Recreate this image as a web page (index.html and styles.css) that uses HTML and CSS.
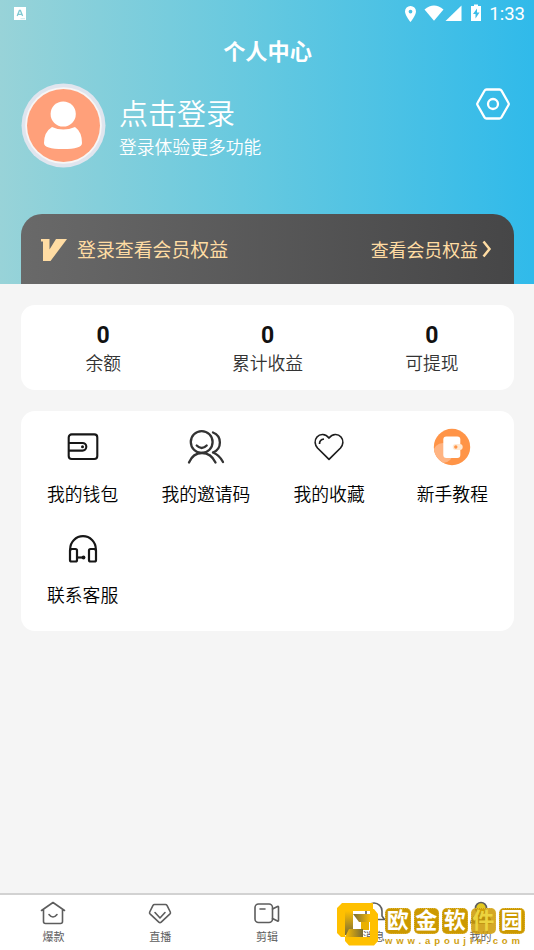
FILE: index.html
```html
<!DOCTYPE html>
<html lang="zh-CN">
<head>
<meta charset="utf-8">
<title>个人中心</title>
<link rel="stylesheet" href="styles.css">
</head>
<body>
<div class="app">
  <header class="hero">
    <div class="status">
      <svg class="app-badge" width="12" height="13" viewBox="0 0 12 13"><rect width="12" height="13" fill="#fff"/><path d="M3.2 9 5.4 3.5h1L8.6 9M4 7.3h4" fill="none" stroke="#7fc9d2" stroke-width="1.3"/><path d="M6.5 11.7h4.5" stroke="#b4dfe3" stroke-width=".7"/></svg>
      <svg class="status-icons" width="80" height="18" viewBox="0 0 80 18" fill="#fff">
        <path fill-rule="evenodd" d="M6.500 1A5.400 5.400 0 0 0 1 6.400C1 10.300 6.500 17 6.500 17S12 10.300 12 6.400A5.400 5.400 0 0 0 6.500 1Zm0 3.700a1.900 1.900 0 1 1 0 3.800 1.900 1.900 0 0 1 0-3.800Z"/>
        <path d="M20.500 4.500Q30-3.500 39.500 4.500L30 15.800Z"/>
        <path d="M57.500.5V16H41.500Z"/>
        <path fill-rule="evenodd" d="M70-.5h4v1.500h3V16H67V1h3ZM73 3.500l-4 5.500h2.500v4.500l4-6H73Z"/>
      </svg>
      <span class="clock">1:33</span>
    </div>
    <h1 class="title">个人中心</h1>
    <section class="profile">
      <svg class="avatar" width="85" height="85" viewBox="0 0 85 85">
        <circle cx="42.500" cy="42.500" r="42" fill="#e0e5ee"/><circle cx="42.500" cy="42.500" r="38.300" fill="#f7f6f6"/><circle cx="42.500" cy="42.500" r="36.500" fill="#ffa07a"/>
        <path d="M31 44Q42 49 54 44Q61 49 61 60Q61 66 42 66Q23 66 23 60Q23 49 31 44Z" fill="#fff"/><circle cx="42.200" cy="31" r="14" fill="#ffa07a"/><circle cx="42.200" cy="31" r="12.600" fill="#fff"/>
      </svg>
      <div class="who"><div class="login">点击登录</div><div class="hint">登录体验更多功能</div></div>
      <svg class="settings" width="34" height="32" viewBox="0 0 34 32" fill="none" stroke="#fff" stroke-width="2.300"><path d="M10.500 1.500h13q1.300 0 2 1.200L32.500 15q.600 1 0 2l-7 12.300q-.700 1.200-2 1.200h-13q-1.300 0-2-1.200L1.500 17q-.600-1 0-2l7-12.300q.700-1.200 2-1.200Z"/><circle cx="17" cy="16" r="5"/></svg>
    </section>
    <section class="vip">
      <svg class="v-mark" width="27" height="24" viewBox="0 0 27 24"><path d="M0 1h8.500v10.500L15 1h11L9.500 23H2V3.500H0Z" fill="#ffdca3"/></svg>
      <span class="vip-title">登录查看会员权益</span>
      <span class="vip-more">查看会员权益</span>
      <svg class="chevron" width="10" height="18" viewBox="0 0 10 18"><path d="m1.500 1.500 6 7.500-6 7.500" fill="none" stroke="#ffdca3" stroke-width="2.500"/></svg>
    </section>
  </header>
  <main class="content">
    <section class="card stats">
      <div class="stat"><b>0</b><span>余额</span></div>
      <div class="stat"><b>0</b><span>累计收益</span></div>
      <div class="stat"><b>0</b><span>可提现</span></div>
    </section>
    <section class="card menu">
      <div class="item">
        <svg width="40" height="40" viewBox="0 0 40 40" fill="none" stroke="#171717" stroke-width="2.100"><rect x="5.700" y="7.400" width="28.600" height="24.600" rx="3"/><path d="M6 16h13.500a3.800 3.800 0 0 1 0 7.600H6"/><circle cx="19.500" cy="19.800" r="1.500" fill="#171717" stroke="none"/></svg>
        <span>我的钱包</span>
      </div>
      <div class="item">
        <svg width="40" height="40" viewBox="0 0 40 40" fill="none" stroke="#333" stroke-width="2.300" stroke-linecap="round"><circle cx="15.700" cy="15" r="10.900"/><path d="M10.700 18.500q5 5 10 0M3 35.500q4-9.500 13-9.500t13.500 9.500M27 5.500a10.700 10.700 0 0 1 0 20M27 25.500q6.500 2.500 10 9.500"/></svg>
        <span>我的邀请码</span>
      </div>
      <div class="item">
        <svg width="40" height="40" viewBox="0 0 40 40" fill="none" stroke="#1d1d1d" stroke-width="1.700" stroke-linejoin="round"><path d="M20 11C16.500 6.500 11 6.500 8 10c-3 3.500-2 8 .5 11L20 32.300 31.500 21c2.500-3 3.500-7.500.5-11-3-3.500-8.500-3.500-12 1Z"/><path d="M10.500 17q0-4.500 4.500-5"/></svg>
        <span>我的收藏</span>
      </div>
      <div class="item">
        <svg width="40" height="40" viewBox="0 0 40 40"><defs><clipPath id="disc"><circle cx="20" cy="20" r="18.200"/></clipPath></defs><circle cx="20" cy="20" r="18.200" fill="#ff9447"/><circle cx="11" cy="26" r="10" fill="#ffb482" clip-path="url(#disc)"/><rect x="11.300" y="9.500" width="17" height="21.500" rx="3" fill="#fff"/><rect x="20.700" y="17" width="10" height="6" rx="3" fill="#ffe9d3"/><circle cx="23.800" cy="20" r="1.700" fill="#ff9447"/></svg>
        <span>新手教程</span>
      </div>
      <div class="item">
        <svg width="40" height="40" viewBox="0 0 40 40" fill="none" stroke="#171717" stroke-width="2.200"><path d="M7.200 23v-2a12.800 12.800 0 0 1 25.600 0v2"/><rect x="7" y="21" width="7" height="12.500" rx="1.500"/><rect x="26" y="21" width="7" height="12.500" rx="1.500"/><path d="M14 29.500h5"/><circle cx="20.500" cy="29.500" r="1.900" fill="#171717" stroke="none"/></svg>
        <span>联系客服</span>
      </div>
    </section>
  </main>
  <nav class="tabs">
    <div class="tab"><svg width="26" height="24" viewBox="0 0 26 24"><path d="M1.500 9.500 13 1.500l11.500 8M3.500 8.500v12q0 2 2 2h15q2 0 2-2v-12M9 13.500q4 5 8 0"/></svg><span>爆款</span></div>
    <div class="tab"><svg width="26" height="24" viewBox="0 0 26 24"><path d="M7.500 3.500h11q1 0 1.500.800l3.300 6.700q.500 1-.300 1.800l-8.800 8.400q-1.200 1.100-2.400 0L3 12.800q-.800-.800-.300-1.800L6 4.300q.500-.8 1.500-.8ZM8 11.500l5 5.500 5-5.500"/></svg><span>直播</span></div>
    <div class="tab"><svg width="26" height="24" viewBox="0 0 26 24"><rect x="1" y="3" width="17.500" height="18.500" rx="3.500"/><path d="M6 8h5M18.500 8l5-2.500q1-.5 1 .5v13.500q0 1-1 .5l-5-2.500"/></svg><span>剪辑</span></div>
    <div class="tab"><svg width="26" height="24" viewBox="0 0 26 24"><path d="M2.500 18.500h21M5 18V10a8 8 0 0 1 16 0v5l2.500 3.500M10 21.500h6"/></svg><span>消息</span></div>
    <div class="tab active"><svg width="26" height="24" viewBox="0 0 26 24"><circle cx="13" cy="7" r="5.500"/><path d="M3 22q0-8 10-8t10 8Z"/></svg><span>我的</span></div>
  </nav>
  <div class="watermark">
    <svg class="mark" width="48" height="44" viewBox="0 0 48 44">
      <defs>
        <linearGradient id="down" x1="0" y1="0" x2="0" y2="1"><stop stop-color="#ffc000"/><stop offset="1" stop-color="#766a36"/></linearGradient>
        <linearGradient id="right"><stop stop-color="#ffc000"/><stop offset="1" stop-color="#766a36"/></linearGradient>
        <linearGradient id="left"><stop stop-color="#766a36"/><stop offset="1" stop-color="#ffc000"/></linearGradient>
      </defs>
      <path d="M0 5 5 0h31v8H8v26H4L0 30Z" fill="#ffc000"/>
      <path d="M8 8h8v24H8Z" fill="url(#down)"/>
      <path d="M16 11h18v8H22Z" fill="url(#left)"/>
      <path d="M24 19h8v8h-8Z" fill="#e9b000"/>
      <path d="M12 26h14v8H8Z" fill="url(#right)"/>
      <path d="M33 6h4l4 5v27l-4 4.500H12L8 38v-4h25Z" fill="#ffc000"/>
    </svg>
    <div class="brand"><div class="seals"><b>欧</b><b>金</b><b>软</b><b class="faded">件</b><b>园</b></div><div class="url">www.apoujin.com</div></div>
  </div>
</div>
</body>
</html>
```
FILE: styles.css
```css
* { box-sizing: border-box; }
body { margin: 0; font-family: Roboto, "Noto Sans CJK SC", sans-serif; color: #111; }
svg { display: block; flex: none; overflow: visible; }
.app { position: relative; display: flex; flex-direction: column; width: 534px; height: 950px; overflow: hidden; background: #f5f5f5; }
.hero { height: 284px; padding: 0 20px 0 21px; color: #fff; background: linear-gradient(90deg, #98d3d8 0%, #63c8e0 50%, #30baea 100%); }
.status { display: flex; align-items: center; height: 27px; margin-right: -11px; margin-left: -7px; }
.status-icons { margin-left: auto; }
.clock { margin-left: 5px; font-size: 18.500px; line-height: 28px; }
.title { margin: 0; padding-top: 9px; height: 56px; font-size: 22.200px; line-height: 32px; font-weight: 700; text-align: center; }
.profile { display: flex; height: 131px; align-items: flex-start; }
.who { margin-left: 13px; padding-top: 12px; font-weight: 350; }
.login { font-size: 29px; line-height: 41px; }
.hint { font-size: 17.800px; line-height: 24px; }
.settings { margin: 5px 4px 0 auto; }
.vip { display: flex; align-items: center; height: 70px; padding: 0 22px 0 20px; border-radius: 21px 21px 0 0; color: #ffdca3; background: linear-gradient(90deg, #696969, #464647); }
.v-mark { margin-top: 2px; }
.vip-title { margin: 0 0 2px 9px; font-size: 18.900px; }
.vip-more { margin-left: auto; font-size: 17.900px; }
.chevron { margin-left: 4px; }
.content { flex: 1; padding: 21px 20px 0 21px; }
.card { border-radius: 14px; background: #fff; }
.stats { display: grid; grid-template-columns: repeat(3, 1fr); height: 85px; padding-top: 16px; text-align: center; }
.stat { display: flex; flex-direction: column; }
.stat b { font-size: 23px; line-height: 29px; font-weight: 700; }
.stat span { font-size: 17.800px; line-height: 28px; font-weight: 350; color: #333; }
.menu { display: grid; grid-template-columns: repeat(4, 1fr); grid-auto-rows: 101px; height: 220px; margin-top: 21px; padding-top: 16px; }
.item { display: flex; flex-direction: column; align-items: center; gap: 14px; font-size: 17.800px; line-height: 27px; font-weight: 350; color: #000; }
.tabs { display: grid; grid-template-columns: repeat(5, 1fr); height: 57px; padding-top: 6px; border-top: 2px solid #d2d2d2; background: #fff; }
.tab { display: flex; flex-direction: column; align-items: center; font-size: 11px; line-height: 16px; color: #5d5d5d; }
.tab svg { fill: none; stroke: #5d5d5d; stroke-width: 1.600; stroke-linecap: round; stroke-linejoin: round; }
.tab span { margin-top: 5px; }
.tab.active svg { fill: #555; }
.tab.active circle { fill: #e3c81f; }
.watermark { position: absolute; left: 337px; top: 903px; display: flex; }
.seals { display: flex; gap: 3px; margin: 5px 0 0; }
.seals b { width: 25.500px; height: 26px; border: 1px dotted #dfb63c; border-radius: 5px; background: #cc9900; color: #fff; font-size: 22px; line-height: 23px; text-align: center; }
.seals .faded { background: rgba(204, 153, 0, .85); color: #ecd33f; }
.url { font: 700 9.500px/14px "Liberation Sans", sans-serif; letter-spacing: 3.900px; color: #cf9f12; }
```
